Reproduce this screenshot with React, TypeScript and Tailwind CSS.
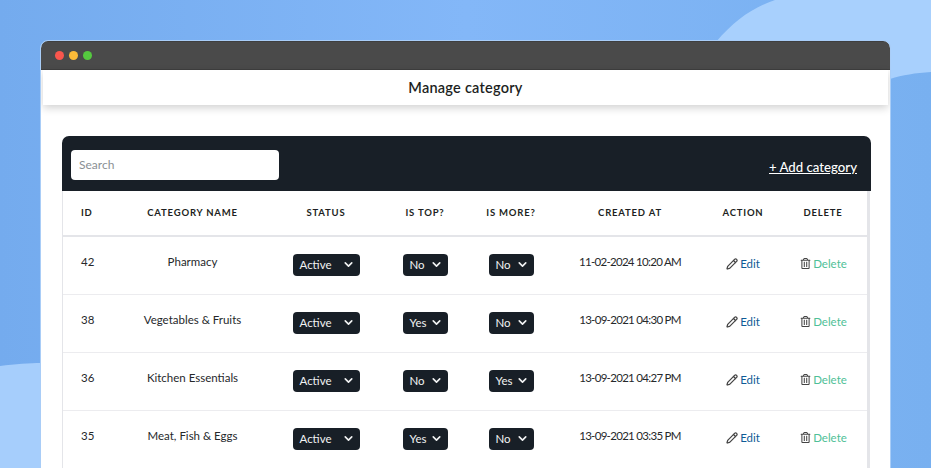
import { ChevronDown, Pencil } from 'lucide-react';
import { FaRegTrashAlt } from 'react-icons/fa';

const COLS = 'grid grid-cols-[47px_165px_102px_96px_76px_162px_64px_92px]';

const ROWS = [
  { id: 42, name: 'Pharmacy', top: 'No', more: 'No', created: '11-02-2024 10:20 AM' },
  { id: 38, name: 'Vegetables & Fruits', top: 'Yes', more: 'No', created: '13-09-2021 04:30 PM' },
  { id: 36, name: 'Kitchen Essentials', top: 'No', more: 'Yes', created: '13-09-2021 04:27 PM' },
  { id: 35, name: 'Meat, Fish & Eggs', top: 'Yes', more: 'No', created: '13-09-2021 03:35 PM' },
];

function Dropdown({ value, wide }: { value: string; wide?: boolean }) {
  return (
    <div className={`-mt-[2px] flex h-[22px] items-center justify-between rounded-[4px] bg-[#181f27] pr-[5px] pl-[7px] text-[11.5px] text-[#f1f2f3] ${wide ? 'w-[67px]' : 'w-[45px]'}`}>
      <span>{value}</span>
      <ChevronDown size={13} strokeWidth={3} />
    </div>
  );
}

export default function App() {
  return (
    <div className="relative h-[468px] w-[931px] overflow-hidden bg-gradient-to-r from-[#74abee] via-[#83b7f8] to-[#78b0f0] px-[41px] pt-[41px] font-['Lato','Open_Sans',sans-serif]">
      <svg className="absolute inset-0" width="931" height="468" viewBox="0 0 931 468" fill="none">
        <path d="M716 42C735 20 752 8 775 0H931V72C915 73 903 75 890 79Z" fill="#a8d0fd" />
        <path d="M0 366C15 364 30 363 41 363V468H0Z" fill="#a6cefc" />
      </svg>

      <div className="relative h-[440px] overflow-hidden rounded-t-[7px] bg-white outline-1 outline-[#a9cdf7]">
        <div className="flex h-[29px] items-center gap-[5px] border-y border-y-[#3f3f3f] bg-[#4a4a4a] pl-[14px]">
          <span className="h-[9px] w-[9px] rounded-full bg-[#f9564d]" />
          <span className="h-[9px] w-[9px] rounded-full bg-[#fdbb38]" />
          <span className="h-[9px] w-[9px] rounded-full bg-[#55c93f]" />
        </div>

        <div className="mx-[2px] flex h-[35px] items-center justify-center bg-white text-[14.5px] font-semibold tracking-[0.25px] text-[#1d1f22] shadow-[0_3px_8px_rgba(0,0,0,0.18)]">
          Manage category
        </div>

        <div className="mx-[21px] mt-[31px] w-[809px]">
          <div className="flex h-[55px] items-start justify-between rounded-t-[7px] bg-[#181f27] pt-[14px] pr-[14px] pl-[9px]">
            <div className="flex h-[30px] w-[208px] items-center rounded-[4px] bg-white pl-[8px] text-[12px] text-[#8a8f94]">Search</div>
            <a className="mt-[8px] text-[13.2px] font-medium text-white underline">+ Add category</a>
          </div>

          <div className="w-[808px] border-l border-r-[3px] border-[#e4e5e9]">
            <div className={`${COLS} h-[46px] items-center border-b-2 border-[#e4e5e9] text-center text-[9.5px] font-bold tracking-[0.8px] text-[#1d1f22]`}>
              <div className="pl-[18px] text-left">ID</div>
              <div>CATEGORY NAME</div>
              <div>STATUS</div>
              <div>IS TOP?</div>
              <div>IS MORE?</div>
              <div>CREATED AT</div>
              <div>ACTION</div>
              <div className="pl-[4px]">DELETE</div>
            </div>

            {ROWS.map((row) => (
              <div key={row.id} className={`${COLS} h-[58px] items-center border-b border-[#ececef] text-center text-[11.5px] text-[#26282b]`}>
                <div className="-mt-[8px] pl-[18px] text-left">{row.id}</div>
                <div className="-mt-[8px]">{row.name}</div>
                <div className="flex justify-center"><Dropdown value="Active" wide /></div>
                <div className="flex justify-center"><Dropdown value={row.top} /></div>
                <div className="flex justify-center"><Dropdown value={row.more} /></div>
                <div className="-mt-[7px] tracking-[-0.7px]">{row.created}</div>
                <div className="-mt-[4px] flex items-center justify-center gap-[2px] text-[#0f5a96]">
                  <Pencil size={12} strokeWidth={2.5} className="text-[#444444]" />
                  Edit
                </div>
                <div className="-mt-[4px] flex items-center justify-center gap-[2px] pl-[5px] text-[#4fbf97]">
                  <FaRegTrashAlt size={11} className="text-[#444444]" />
                  Delete
                </div>
              </div>
            ))}
          </div>
        </div>
      </div>
    </div>
  );
}
